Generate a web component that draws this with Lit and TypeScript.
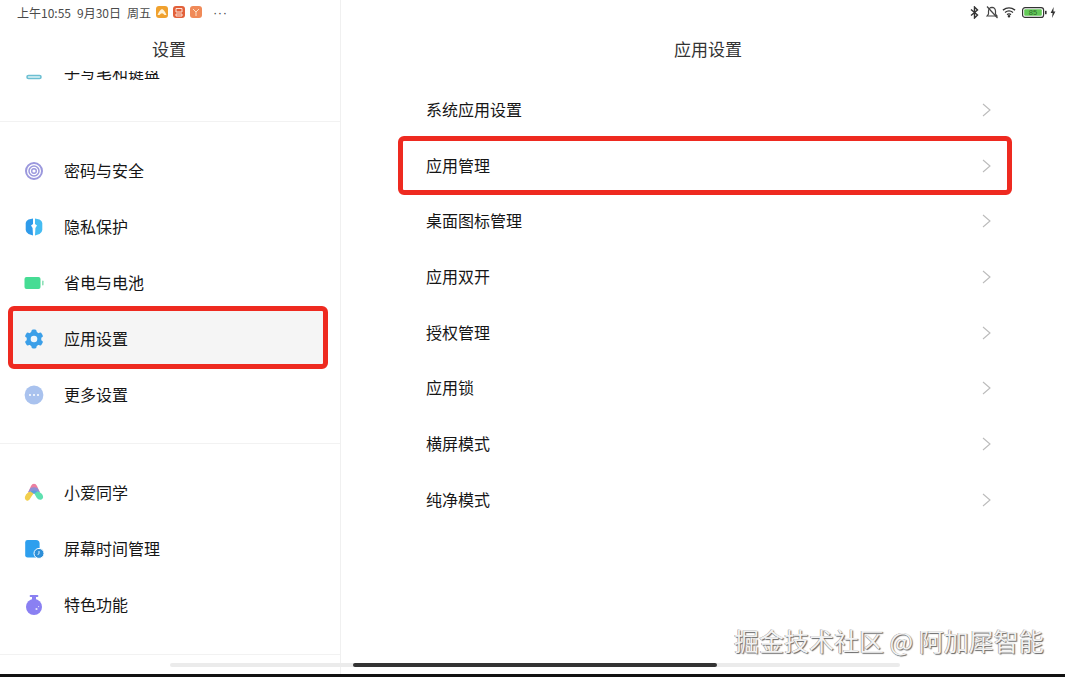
import { LitElement, html, css, svg } from 'lit';
import { customElement } from 'lit/decorators.js';

const icons: { [key: string]: unknown } = {
	keyboard: svg`<rect x="3" y="13.5" width="14" height="3" rx="1.5" fill="#dff3f6" stroke="#6cbfd2" stroke-width="1.6"/>`,
	lock: svg`
		<circle cx="10" cy="10" r="8" fill="none" stroke="#9b98dd" stroke-width="2"/>
		<circle cx="10" cy="10" r="5" fill="none" stroke="#9b98dd" stroke-width="1.5"/>
		<circle cx="10" cy="10" r="2.3" fill="none" stroke="#9b98dd" stroke-width="1.4"/>`,
	shield: svg`
		<path d="M9 1.5 L4.5 2.5 Q2 3.5 1.7 6 L1.7 13 Q2 15.8 4.5 17 L9 18.5 L8.6 11 L7 8.5 L9 7 Z" fill="#2f9bea"/>
		<path d="M11 1.5 L15.5 2.5 Q18 3.5 18.3 6 L18.3 13 Q18 15.8 15.5 17 L11 18.5 L11.4 11 L13 8.5 L11 7 Z" fill="#45bcf2"/>`,
	battery: svg`
		<rect x="0.5" y="4" width="16" height="12" rx="2" fill="#46dc94"/>
		<rect x="18" y="7.5" width="1.6" height="5" rx="0.8" fill="#8fe0b8"/>`,
	gear: svg`
		<circle cx="10" cy="10" r="7.4" fill="#3b9fe8"/>
		${[0, 60, 120, 180, 240, 300].map(
			(angle) => svg`<rect x="7.4" y="0.6" width="5.2" height="5" rx="1.6" fill="#3b9fe8" transform="rotate(${angle} 10 10)"/>`
		)}
		<circle cx="10" cy="10" r="3.3" fill="#eef6fc"/>`,
	more: svg`
		<circle cx="10" cy="10" r="9.4" fill="#a9c2ee"/>
		<circle cx="6" cy="10" r="1" fill="#fff"/><circle cx="10" cy="10" r="1" fill="#fff"/><circle cx="14" cy="10" r="1" fill="#fff"/>`,
	xiaoai: svg`
		<path d="M10 .8 Q12 .8 13 3 L16 9.5 Q12.5 7.5 10 9 Q7.5 7.5 4 9.5 L7 3 Q8 .8 10 .8 Z" fill="#ec7fa0"/>
		<path d="M10 9 L4 9.5 L6.5 5 Q10 3.5 13.5 5 L16 9.5 Z" fill="#7d93de" opacity=".85"/>
		<path d="M10 10 Q6 6.5 2 11.5 Q-.5 16 2.5 17.5 Q5 18.5 6.5 15 Q8 12.5 10 10 Z" fill="#f2cf4e"/>
		<path d="M10 10 Q14 6.5 18 11 Q20.5 14.5 17.5 16.5 Q14.5 17.5 12.5 14.5 Z" fill="#5fe0b0"/>
		<path d="M6.5 8.5 Q10 6.5 13.5 8.5 L10 11 Z" fill="#5aa0de"/>`,
	screen: svg`
		<path d="M3.6 1 L12 1 Q15.6 1 15.6 4.6 L15.6 18.6 L3.6 18.6 Q1.2 18.6 1.2 16.2 L1.2 3.4 Q1.2 1 3.6 1 Z" fill="#2e9fee"/>
		<circle cx="15" cy="14.4" r="5" fill="#2e8fd8" stroke="#fff" stroke-width="1"/>
		<path d="M15 12 L15 14.8 L13.6 15.6" stroke="#dff1fd" stroke-width="1" fill="none"/>`,
	flask: svg`
		<rect x="5.6" y="0" width="8.8" height="2" rx="1" fill="#8a80f2"/>
		<rect x="8" y="1.5" width="4" height="4" fill="#8a80f2"/>
		<circle cx="10" cy="12" r="8" fill="#8a80f2"/>
		<circle cx="12.5" cy="14" r="1.1" fill="#e7e5fd"/><circle cx="14.6" cy="11.6" r=".6" fill="#e7e5fd"/>`
};

const sections = [
	[{ icon: 'keyboard', label: '手写笔和键盘' }],
	[
		{ icon: 'lock', label: '密码与安全' },
		{ icon: 'shield', label: '隐私保护' },
		{ icon: 'battery', label: '省电与电池' },
		{ icon: 'gear', label: '应用设置', active: true },
		{ icon: 'more', label: '更多设置' }
	],
	[
		{ icon: 'xiaoai', label: '小爱同学' },
		{ icon: 'screen', label: '屏幕时间管理' },
		{ icon: 'flask', label: '特色功能' }
	]
];

const settings = ['系统应用设置', '应用管理', '桌面图标管理', '应用双开', '授权管理', '应用锁', '横屏模式', '纯净模式'];

@customElement('app-root')
export class AppRoot extends LitElement {
	static styles = [
		css`
			:host {
				display: block;
				position: relative;
				width: 1065px;
				height: 677px;
				overflow: hidden;
				background: #fff;
				font-family: 'Noto Sans CJK SC', 'Noto Sans', sans-serif;
				color: #161616;
			}
			.layout {
				display: grid;
				grid-template-columns: 341px 1fr;
				height: 674px;
			}
			.sidebar {
				display: flex;
				flex-direction: column;
				border-right: 1px solid #f0f0f0;
				overflow: hidden;
			}
			.status {
				display: flex;
				align-items: center;
				height: 24px;
				font-size: 12px;
				color: #4a4a4a;
			}
			.status.left {
				padding-left: 17px;
				gap: 6px;
				white-space: nowrap;
			}
			.apps {
				display: flex;
				gap: 5px;
				margin-left: -1px;
			}
			.app {
				width: 12px;
				height: 12px;
				display: block;
			}
			.dots {
				margin-left: 5px;
				font-family: 'Liberation Sans', sans-serif;
				font-size: 13px;
				letter-spacing: 0.5px;
			}
			.status.right {
				justify-content: flex-end;
				padding-right: 9px;
			}
			.status.right svg:nth-child(2) {
				margin-left: 7px;
			}
			.status.right svg:nth-child(3) {
				margin-left: 4px;
			}
			.status.right svg:nth-child(4) {
				margin-left: 6px;
			}
			.status.right svg:nth-child(5) {
				margin-left: 3px;
			}
			.title {
				height: 47px;
				box-sizing: border-box;
				padding-top: 2px;
				display: flex;
				align-items: center;
				justify-content: center;
				font-size: 17px;
				color: #333;
			}
			.sidebar .title {
				padding-right: 2px;
			}
			.main .title {
				padding-left: 10px;
			}
			.scroll {
				flex: 1;
				overflow: hidden;
			}
			.scroll-inner {
				margin-top: -27px;
			}
			section {
				padding: 21px 0 20px;
				border-bottom: 1px solid #f2f2f2;
			}
			section:first-child {
				padding: 0 0 21px;
			}
			section:last-child {
				padding-bottom: 21px;
			}
			.item {
				position: relative;
				display: flex;
				align-items: center;
				height: 56px;
				padding-left: 24px;
				gap: 20px;
				font-size: 16px;
			}
			.item span,
			.row span {
				padding-bottom: 2px;
			}
			.item svg {
				width: 20px;
				height: 20px;
				overflow: visible;
				flex: none;
			}
			.item.active {
				background: #f5f5f5;
				margin: 0 16px 0 12px;
				padding-left: 12px;
			}
			.item.active .mark {
				inset: -5px -4px -2px -4px;
			}
			.mark {
				position: absolute;
				border: 5px solid #ee2a20;
				border-radius: 6px;
				pointer-events: none;
			}
			.main {
				display: flex;
				flex-direction: column;
			}
			.list {
				padding: 11px 74px 0 85px;
			}
			.row {
				position: relative;
				display: flex;
				align-items: center;
				justify-content: space-between;
				height: 55.7px;
				font-size: 16px;
			}
			.row svg {
				width: 9px;
				height: 14px;
				display: block;
			}
			.row .mark {
				inset: -2px -21px -2px -28px;
			}
			.home {
				position: absolute;
				left: 170px;
				top: 663px;
				width: 730px;
				height: 4px;
				border-radius: 2px;
				background: #ebebeb;
			}
			.home-thumb {
				position: absolute;
				left: 183px;
				top: 0;
				width: 364px;
				height: 4px;
				border-radius: 2px;
				background: #333;
			}
			.nav-edge {
				position: absolute;
				left: 0;
				right: 0;
				bottom: 0;
				height: 3px;
				background: #111;
			}
			.watermark {
				position: absolute;
				left: 734px;
				top: 622px;
				font-size: 25px;
				line-height: 36px;
				white-space: pre;
				color: #f2f2f2;
				text-shadow: 1px 1px 1px #666, -0.5px -0.5px 0 #8f8f8f;
			}
		`
	];

	renderStatusIcons() {
		return html`
			<svg width="9" height="13" viewBox="0 0 9 13" fill="none" stroke="#333" stroke-width="1.4">
				<path d="M1 3.5 L7.5 9 L4.5 12 L4.5 1 L7.5 4 L1 9.5" />
			</svg>
			<svg width="12" height="14" viewBox="0 0 12 14" fill="none" stroke="#444" stroke-width="1.2">
				<path d="M1 11 L2.5 9 L2.5 6 Q2.8 2.5 6 2.3 Q9.2 2.5 9.5 6 L9.5 9 L11 11 Z" />
				<path d="M1 1.5 L11.5 13" />
			</svg>
			<svg width="14" height="12" viewBox="0 0 15 12" fill="none" stroke="#333" stroke-width="1.4">
				<path d="M1 4 Q7.5 -1 14 4" />
				<path d="M3.2 6.5 Q7.5 3 11.8 6.5" />
				<path d="M5.4 8.8 Q7.5 7.2 9.6 8.8" />
				<circle cx="7.5" cy="10.6" r="0.7" fill="#333" />
			</svg>
			<svg width="25" height="11" viewBox="0 0 25 11">
				<rect x="0.6" y="0.6" width="21" height="9.8" rx="2.5" fill="none" stroke="#333" stroke-width="1.2" />
				<rect x="2.2" y="2.2" width="17.6" height="6.6" rx="1" fill="#63c957" />
				<text x="11" y="8.2" font-size="7.5" text-anchor="middle" fill="#2c6a2c" font-family="Liberation Sans">85</text>
				<rect x="23" y="3.8" width="1.6" height="3.4" fill="#333" />
			</svg>
			<svg width="6" height="11" viewBox="0 0 6 11"><path d="M3.6 0 L.6 6 L2.6 6 L2 11 L5.4 4.6 L3.4 4.6 Z" fill="#333" /></svg>
		`;
	}

	render() {
		return html`<div class="layout">
				<aside class="sidebar">
					<div class="status left">
						<span>上午10:55</span>
						<span>9月30日</span>
						<span>周五</span>
						<span class="apps">
							<svg class="app" viewBox="0 0 12 12">
								<rect width="12" height="12" rx="3" fill="#f0a12e" />
								<path d="M1.5 9 Q3.5 4 6 3 Q8.5 4 10.5 9 L8.5 9 Q6 5.5 3.5 9 Z" fill="#fff3d8" />
							</svg>
							<svg class="app" viewBox="0 0 12 12">
								<rect width="12" height="12" rx="3" fill="#e2603a" />
								<path d="M3 2.5 H9 V6 H3 Z M3 8 H9 V10 H3 Z" fill="none" stroke="#fde4d8" stroke-width="1" />
							</svg>
							<svg class="app" viewBox="0 0 12 12">
								<rect width="12" height="12" rx="3" fill="#f08a58" />
								<path d="M3 3 L6 6 L9 3 M6 6 V10" fill="none" stroke="#fbe2c8" stroke-width="1" />
							</svg>
						</span>
						<span class="dots">···</span>
					</div>
					<div class="title">设置</div>
					<div class="scroll">
						<div class="scroll-inner">
							${sections.map(
								(items) => html`<section>
									${items.map(
										(item: { icon: string; label: string; active?: boolean }) => html`<div
											class="item ${item.active ? 'active' : ''}"
										>
											<svg viewBox="0 0 20 20">${icons[item.icon]}</svg>
											<span>${item.label}</span>
											${item.active ? html`<div class="mark"></div>` : ''}
										</div>`
									)}
								</section>`
							)}
						</div>
					</div>
				</aside>
				<main class="main">
					<div class="status right">${this.renderStatusIcons()}</div>
					<div class="title">应用设置</div>
					<div class="list">
						${settings.map(
							(label) => html`<div class="row">
								<span>${label}</span>
								<svg viewBox="0 0 9 14" fill="none" stroke="#bbb" stroke-width="1.1">
									<path d="M1 1 L8 7 L1 13" />
								</svg>
								${label === '应用管理' ? html`<div class="mark"></div>` : ''}
							</div>`
						)}
					</div>
				</main>
			</div>
			<div class="home"><div class="home-thumb"></div></div>
			<div class="nav-edge"></div>
			<div class="watermark">掘金技术社区 @ 阿加犀智能</div>`;
	}
}
